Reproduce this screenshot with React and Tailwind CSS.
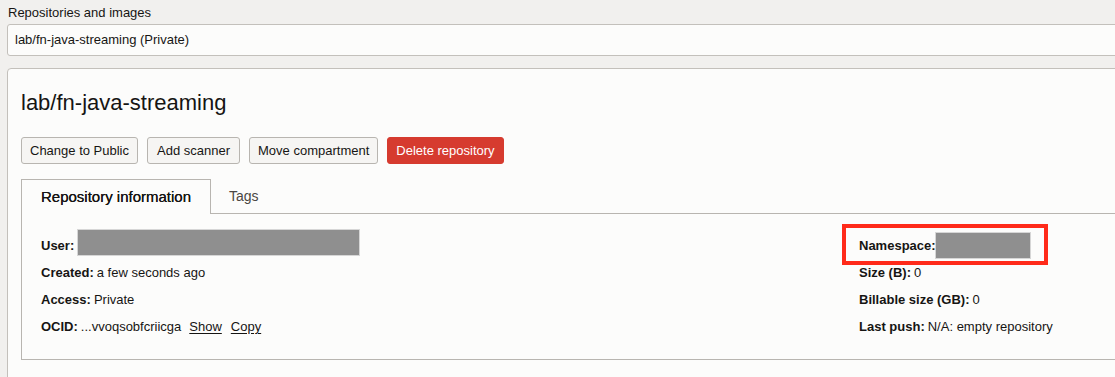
import React from "react";

const Row = ({ label, children }) => (
    <div className="h-[27px] flex items-center whitespace-nowrap">
        <span className="font-bold">{label}</span>
        <span className="ml-[3px] flex items-center">{children}</span>
    </div>
);

const Redacted = ({ className }) => <span className={"inline-block bg-[#8f8f8f] border border-[#d6d6d6] " + className} />;

export default function App() {
    return (
        <div className="w-[1115px] h-[377px] overflow-hidden bg-[#f1f0ee] pt-[5px] pl-[7px] text-[#161513] font-['Liberation_Sans',Arial,sans-serif]">
            <div className="text-[13px] leading-[16px] pl-[1px]">Repositories and images</div>
            <div className="mt-[3px] w-[1125px] h-[32px] border border-[#c3c0bb] rounded-[3px] bg-[#fcfcfb] flex items-center pl-[7px] text-[13px]">
                lab/fn-java-streaming (Private)
            </div>

            <div className="mt-[12px] w-[1125px] h-[330px] border border-[#c3c0bb] rounded-[4px] bg-[#fcfcfb] pl-[13px] pt-[20px]">
                <h1 className="text-[22px] leading-[28px]">lab/fn-java-streaming</h1>

                <div className="mt-[20px] flex gap-[9px] text-[13px]">
                    <button className="h-[27px] px-[8px] border border-[#b8b5b0] rounded-[3px] bg-[#f6f5f3]">Change to Public</button>
                    <button className="h-[27px] px-[9px] border border-[#b8b5b0] rounded-[3px] bg-[#f6f5f3]">Add scanner</button>
                    <button className="h-[27px] px-[8px] border border-[#b8b5b0] rounded-[3px] bg-[#f6f5f3]">Move compartment</button>
                    <button className="h-[27px] px-[8px] border border-[#d63b2f] rounded-[3px] bg-[#d63b2f] text-white">Delete repository</button>
                </div>

                <div className="mt-[15px] flex items-end border-b border-[#b8b5b0] h-[35px]">
                    <div className="w-[190px] h-[35px] border border-b-0 border-[#b8b5b0] bg-[#fcfcfb] -mb-px flex items-center justify-center text-[15px] font-medium text-[#161513] [text-shadow:0_0_0.4px_#161513]">
                        Repository information
                    </div>
                    <div className="h-[34px] flex items-center pl-[18px] text-[14px] text-[#4a4743]">Tags</div>
                </div>

                <div className="relative h-[146px] border border-t-0 border-[#b8b5b0] pl-[19px] pt-[18px] text-[13px] flex">
                    <div className="w-[818px]">
                        <Row label="User:">
                            <span className="text-[#1a73b8] relative">
                                g
                                <Redacted className="absolute left-[0px] top-[-7px] w-[283px] h-[27px]" />
                            </span>
                        </Row>
                        <Row label="Created:">a few seconds ago</Row>
                        <Row label="Access:">Private</Row>
                        <Row label="OCID:">
                            <span>...vvoqsobfcriicga</span>
                            <span className="ml-[8px] underline underline-offset-2">Show</span>
                            <span className="ml-[9px] underline underline-offset-2">Copy</span>
                        </Row>
                    </div>
                    <div>
                        <Row label="Namespace:">
                            <Redacted className="-ml-[4px] w-[96px] h-[27px]" />
                        </Row>
                        <Row label="Size (B):">0</Row>
                        <Row label="Billable size (GB):">0</Row>
                        <Row label="Last push:">N/A: empty repository</Row>
                    </div>
                    <div className="absolute left-[820px] top-[10px] w-[206px] h-[41px] border-[4px] border-[#ff2a1a]" />
                </div>
            </div>
        </div>
    );
}
